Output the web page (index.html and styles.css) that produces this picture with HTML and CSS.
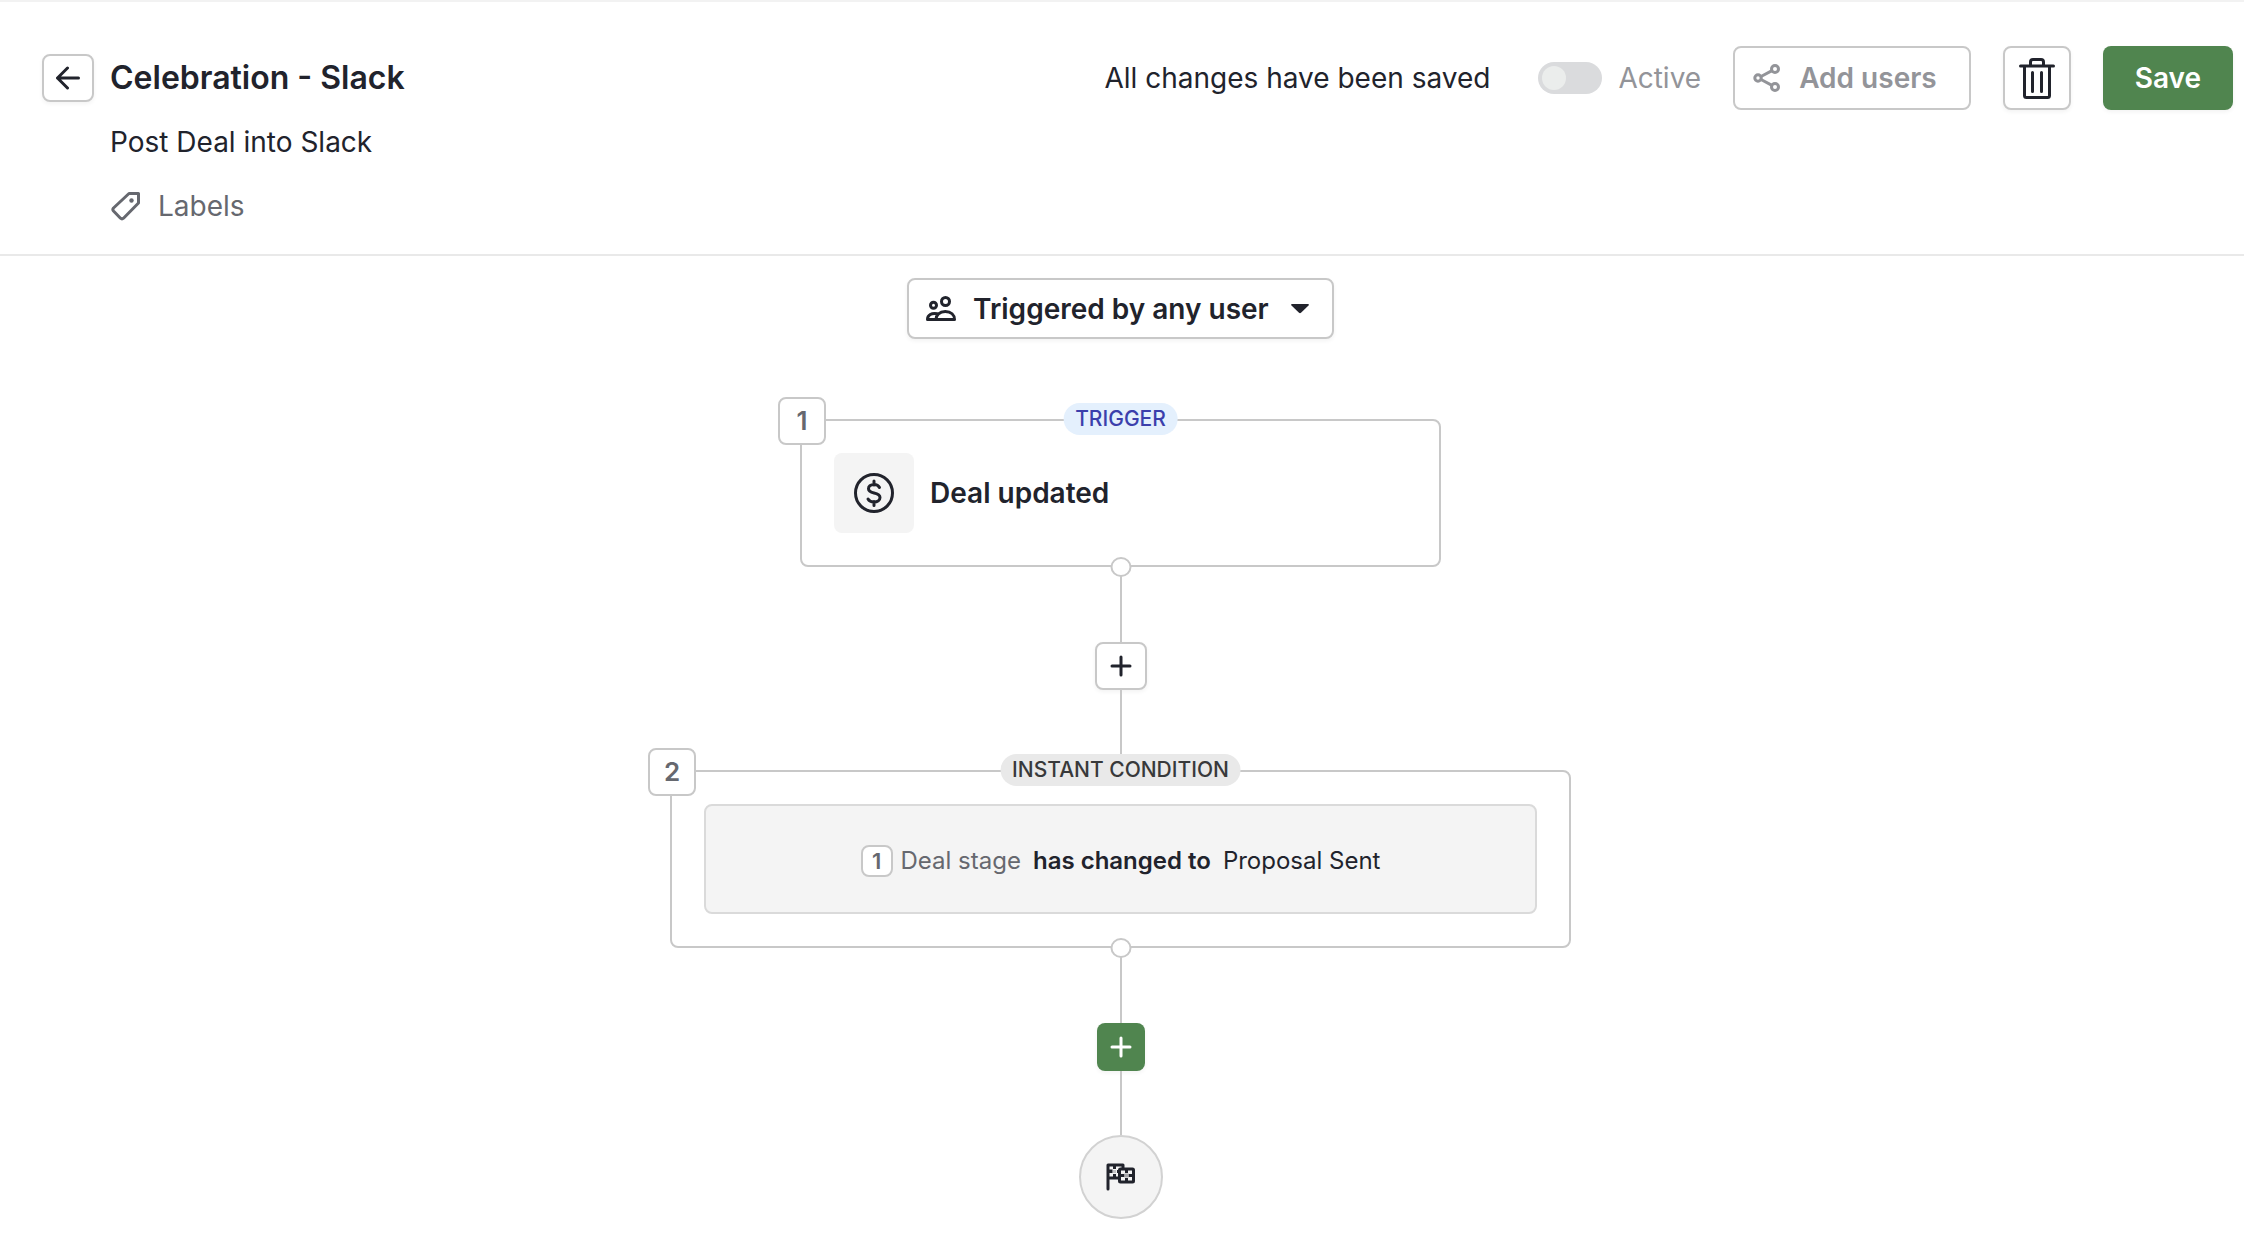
FILE: index.html
```html
<!DOCTYPE html>
<html lang="en">
<head>
<meta charset="utf-8">
<meta name="viewport" content="width=device-width, initial-scale=1">
<title>Celebration - Slack</title>
<link rel="stylesheet" href="styles.css">
</head>
<body>
<header class="header">
  <div class="header-info">
    <button class="btn back" type="button" aria-label="Back">
      <svg width="24" height="24" viewBox="0 0 24 24" fill="none" stroke="currentColor" stroke-width="3" stroke-linecap="round" stroke-linejoin="round"><path d="M22.500 12H1.500M11.500 2L1.500 12l10 10"/></svg>
    </button>
    <div class="header-text">
      <h1 class="title">Celebration - Slack</h1>
      <p class="description">Post Deal into Slack</p>
      <a class="labels" href="#labels">
        <svg width="30" height="30" viewBox="-1 0 30 30" fill="none" stroke="currentColor" stroke-width="3" stroke-linejoin="round"><path d="M18 2.500h9.500v9.500L12.500 27.200q-1.500 1.300-3 0L2.500 20q-1.300-1.500 0-3z"/><circle cx="20.500" cy="9.500" r="2.200" fill="currentColor" stroke="none"/></svg>
        <span>Labels</span>
      </a>
    </div>
  </div>
  <div class="header-actions">
    <span class="status">All changes have been saved</span>
    <label class="switch"><input class="switch-input" type="checkbox" disabled><span>Active</span></label>
    <button class="btn add-users" type="button" disabled>
      <svg width="28" height="28" viewBox="0 0 28 28" fill="none" stroke="currentColor" stroke-width="3"><circle cx="5" cy="14" r="3.200"/><circle cx="22" cy="5" r="3.500"/><circle cx="22" cy="23" r="3.500"/><path d="M8 12.500l11-5.800M8 15.500l11 5.800"/></svg>
      <span>Add users</span>
    </button>
    <button class="btn delete" type="button" aria-label="Delete">
      <svg width="36" height="42" viewBox="0 0 36 42" fill="none" stroke="currentColor" stroke-width="3" stroke-linecap="round" stroke-linejoin="round"><path d="M1.500 9h33M5.500 9v29.500q0 2 2 2h21q2 0 2-2V9M11.500 9V5q0-2.500 2.500-2.500h8q2.500 0 2.500 2.500v4M13.500 15.500v19M22.500 15.500v19"/></svg>
    </button>
    <button class="btn save" type="button">Save</button>
  </div>
</header>
<main class="flow">
  <div class="trigger-user">
    <svg class="users-icon" width="30" height="26" viewBox="0 0 30 26" fill="none" stroke="currentColor" stroke-width="3" stroke-linejoin="round"><circle cx="19.500" cy="5.500" r="4"/><circle cx="7.500" cy="9.300" r="3"/><path d="M10 23.500c0-4.500 3.500-8 9.300-8s9.200 3.500 9.200 8zM10 23.500H1.500c0-4.500 4-7 10-5.700"/></svg>
    <select class="trigger-select" aria-label="Triggered by"><option>Triggered by any user</option></select>
    <svg class="caret" width="18" height="10" viewBox="0 0 18 10" fill="currentColor"><path d="M1 0h16q1.500.5.500 1.600l-7.500 7.200q-1 .8-2 0L.5 1.600Q-.5.500 1 0z"/></svg>
  </div>

  <section class="step step-trigger">
    <span class="step-number">1</span>
    <span class="tag tag-trigger">TRIGGER</span>
    <span class="step-icon">
      <svg width="40" height="40" viewBox="0 0 40 40" fill="none" stroke="currentColor" stroke-width="3" stroke-linecap="round"><circle cx="20" cy="20" r="18.500"/><path d="M20 8v4M20 28.500v4M25.500 14.500q-1.500-3-5.500-3c-3.500 0-5.500 1.900-5.500 4.300 0 2.500 2 3.500 5.500 4.200s6 1.800 6 4.500-2.500 4.500-6 4.500q-4.300 0-6-3"/></svg>
    </span>
    <h2 class="step-title">Deal updated</h2>
    <span class="port"></span>
  </section>

  <div class="connector">
    <span class="line line-out"></span>
    <button class="btn add" type="button" aria-label="Add step"><svg width="22" height="22" viewBox="0 0 22 22" fill="none" stroke="currentColor" stroke-width="3" stroke-linecap="round"><path d="M11 2v18M2 11h18"/></svg></button>
    <span class="line line-step"></span>
  </div>

  <section class="step step-condition">
    <span class="step-number">2</span>
    <span class="tag tag-condition">INSTANT CONDITION</span>
    <p class="condition">
      <span class="source"><span class="source-number">1</span>Deal stage</span>
      <strong class="operator">has changed to</strong>
      <span>Proposal Sent</span>
    </p>
    <span class="port"></span>
  </section>

  <div class="connector">
    <span class="line line-out"></span>
    <button class="btn add add-primary" type="button" aria-label="Add step"><svg width="22" height="22" viewBox="0 0 22 22" fill="none" stroke="currentColor" stroke-width="3" stroke-linecap="round"><path d="M11 2v18M2 11h18"/></svg></button>
    <span class="line line-end"></span>
  </div>

  <div class="finish">
    <svg width="30" height="28" viewBox="0 0 30 28">
      <path d="M2 26V2h15v13H2" fill="#f4f4f4" stroke="currentColor" stroke-width="3" stroke-linecap="round" stroke-linejoin="round"/>
      <path d="M7 3h3v3H7zM3 6.500h3.500V10H3zM7 11h3v3H7zM11 7h3v3h-3z" fill="currentColor"/>
      <path d="M7 7h3v3H7z" fill="#c4c4c6"/>
      <rect x="13.500" y="6" width="14" height="13" rx="1" fill="#f4f4f4" stroke="currentColor" stroke-width="3"/>
      <path d="M19 7h3v3h-3zM15 11h3.500v3H15zM19 15h3v3h-3zM22.500 11H26v3h-3.500z" fill="currentColor"/>
      <path d="M18.500 10.500h4v4h-4z" fill="#a8a8ac"/>
    </svg>
  </div>
</main>
</body>
</html>
```

FILE: styles.css
```css
* { box-sizing: border-box; }

body {
  margin: 0;
  background: #fff;
  color: #21232c;
  font-family: Inter, "Liberation Sans", sans-serif;
  font-size: 28px;
  line-height: 32px;
}

h1, h2, p { margin: 0; }
svg { display: block; flex: none; }

.header {
  display: flex;
  justify-content: space-between;
  align-items: flex-start;
  padding: 44px 11px 16px 42px;
  border-top: 2px solid #f2f2f2;
  border-bottom: 2px solid #e9e9e9;
}
.header-info { display: flex; gap: 16px; }
.header-text > * { display: flex; align-items: center; height: 64px; }
.title { font-size: 32px; font-weight: 600; }
.labels { gap: 18px; color: #66686f; text-decoration: none; }

.btn {
  display: flex;
  align-items: center;
  justify-content: center;
  height: 64px;
  padding: 0;
  border: 2px solid #c8c8c8;
  border-radius: 8px;
  background: #fff;
  color: inherit;
  font: inherit;
  font-weight: 600;
  box-shadow: 0 2px 4px rgba(0, 0, 0, .05);
}
.back { width: 52px; height: 48px; margin-top: 8px; }

.header-actions { display: flex; align-items: center; gap: 32px; white-space: nowrap; }
.switch { display: flex; align-items: center; gap: 16px; margin-left: 16px; color: #939499; }
.switch-input {
  appearance: none;
  width: 64px;
  height: 32px;
  margin: 0;
  padding: 4px;
  border-radius: 16px;
  background: #dadbdd;
}
.switch-input::before {
  content: "";
  display: block;
  width: 24px;
  height: 24px;
  border-radius: 50%;
  background: #ebedec;
}
.add-users { gap: 18px; padding: 0 32px 0 18px; color: #939499; box-shadow: none; }
.delete { width: 68px; }
.save { padding: 0 32px; border: 0; background: #50854f; color: #fff; }

.flow {
  display: flex;
  flex-direction: column;
  align-items: center;
  padding: 22px 3px 16px 0;
}

.trigger-user { display: grid; align-items: center; margin-bottom: 80px; }
.trigger-user > * { grid-area: 1 / 1; }
.users-icon { margin-left: 19px; z-index: 1; pointer-events: none; }
.caret { justify-self: end; margin-right: 25px; z-index: 1; pointer-events: none; }
.trigger-select {
  appearance: none;
  height: 61px;
  padding: 0 63px 0 64px;
  border: 2px solid #c8c8c8;
  border-radius: 8px;
  background: #fff;
  color: inherit;
  font: inherit;
  font-weight: 600;
  box-shadow: 0 2px 4px rgba(0, 0, 0, .05);
}

.step {
  position: relative;
  display: flex;
  align-items: center;
  max-width: 100%;
  padding: 32px;
  border: 2px solid #c8c8c8;
  border-radius: 8px;
  background: #fff;
}
.step-trigger { width: 641px; gap: 16px; }
.step-condition { width: 901px; }
.step-number {
  position: absolute;
  top: -24px;
  left: -24px;
  display: grid;
  place-items: center;
  width: 48px;
  height: 48px;
  border: 2px solid #c8c8c8;
  border-radius: 8px;
  background: #fff;
  color: #66686f;
  font-size: 26px;
  font-weight: 600;
}
.tag {
  position: absolute;
  top: -18px;
  left: 50%;
  transform: translateX(-50%);
  padding: 0 12px;
  border-radius: 16px;
  font-size: 21px;
  font-weight: 500;
  white-space: nowrap;
}
.tag-trigger { background: #e4f0fd; color: #3b3fac; }
.tag-condition { background: #e9e9e9; color: #38393a; }
.port {
  position: absolute;
  bottom: -12px;
  left: 50%;
  transform: translateX(-50%);
  width: 21px;
  height: 20px;
  border: 2px solid #c8c8c8;
  border-radius: 50%;
  background: #fff;
  z-index: 1;
}
.step-icon {
  display: grid;
  place-items: center;
  width: 80px;
  height: 80px;
  border-radius: 8px;
  background: #f4f4f4;
}
.step-title { font-size: 28px; font-weight: 600; }

.condition {
  display: flex;
  flex: 1;
  align-items: center;
  justify-content: center;
  gap: 12px;
  height: 110px;
  padding-top: 4px;
  border: 2px solid #dadada;
  border-radius: 8px;
  background: #f4f4f4;
  font-size: 24px;
}
.source { display: flex; align-items: center; gap: 8px; color: #66686f; }
.source-number {
  display: grid;
  place-items: center;
  width: 32px;
  height: 32px;
  border: 2px solid #c8c8c8;
  border-radius: 8px;
  background: #fff;
  font-size: 22px;
  line-height: 28px;
  font-weight: 600;
}
.operator { font-weight: 600; }

.connector { display: flex; flex-direction: column; align-items: center; }
.line { width: 2px; background: #c8c8c8; }
.line-out { height: 75px; }
.line-step { height: 80px; }
.line-end { height: 64px; }
.add { width: 52px; height: 48px; }
.add-primary { width: 48px; border: 0; background: #50854f; color: #fff; }

.finish {
  display: grid;
  place-items: center;
  width: 84px;
  height: 84px;
  border: 2px solid #d2d2d2;
  border-radius: 50%;
  background: #f4f4f4;
}
```
